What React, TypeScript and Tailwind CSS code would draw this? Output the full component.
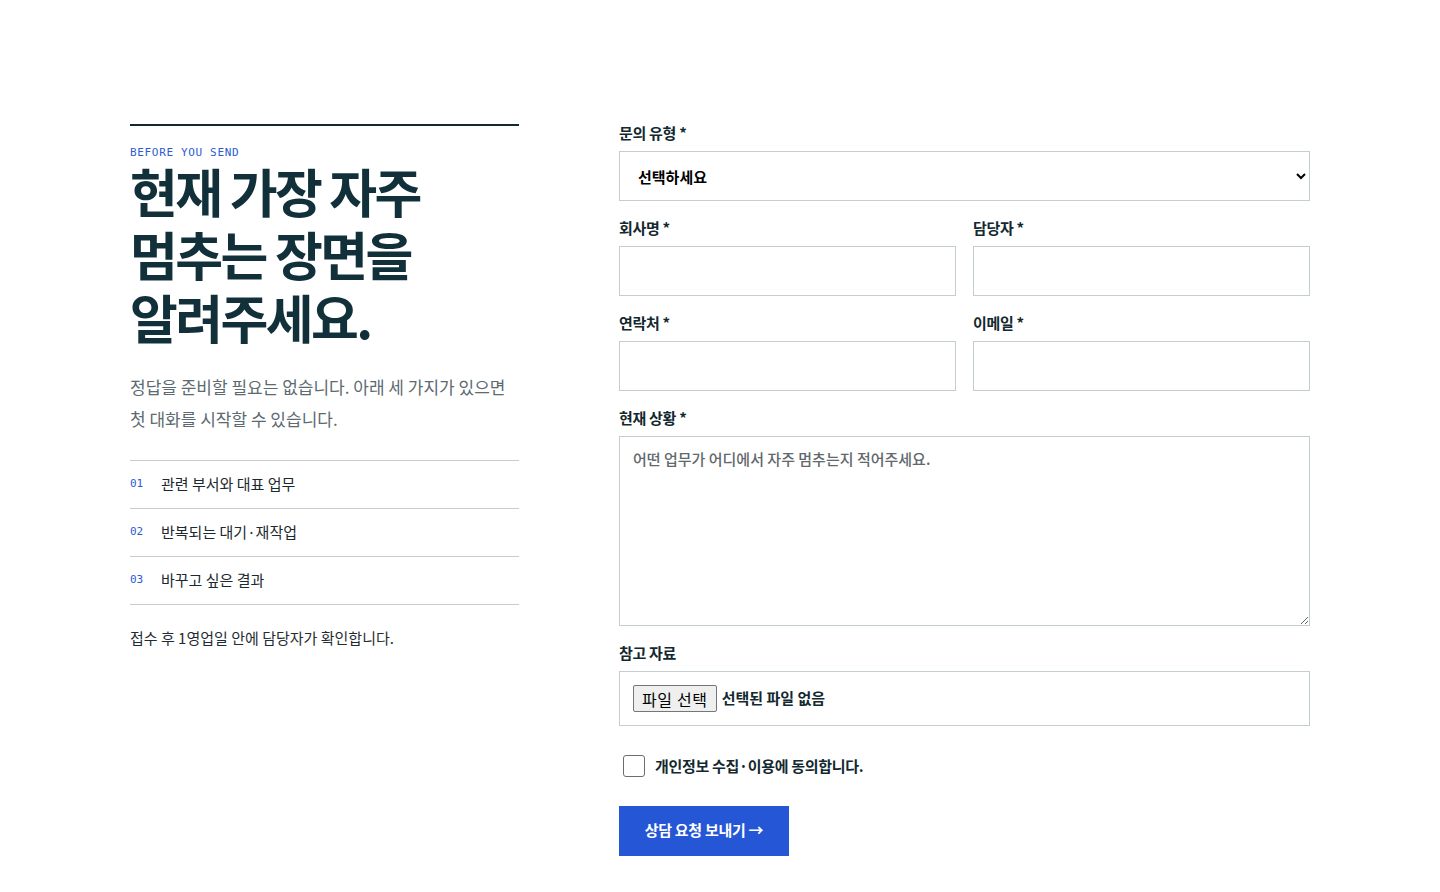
import React from "react";

const KR = "font-['Noto_Sans_CJK_KR','Noto_Sans',sans-serif]";

function Label({ children }: { children: React.ReactNode }) {
  return (
    <div className="mb-[8px] text-[15px] leading-[21px] font-bold text-[#13282f] tracking-[-0.02em]">
      {children}
    </div>
  );
}

export default function App() {
  const items = [
    ["01", "관련 부서와 대표 업무"],
    ["02", "반복되는 대기·재작업"],
    ["03", "바꾸고 싶은 결과"],
  ];
  return (
    <div className={`${KR} min-h-[892px] bg-white`}>
      <div className="mx-auto flex w-[1180px] gap-[100px] pt-[122px]">
        {/* Left column */}
        <div className="w-[389px] shrink-0 pt-[2px]">
          <div className="border-t-2 border-[#13282f]" />
          <div className="mt-[19px] font-['DejaVu_Sans_Mono','Liberation_Mono',monospace] text-[11px] leading-[16px] tracking-[0.06em] text-[#2d5bd1]">
            BEFORE YOU SEND
          </div>
          <h1 className="-mt-[2px] text-[52px] leading-[63px] font-bold tracking-[-0.05em] text-[#12303a]">
            현재 가장 자주
            <br />
            멈추는 장면을
            <br />
            알려주세요.
          </h1>
          <p className="mt-[23px] break-keep text-[17px] leading-[32px] text-[#5d6a70]">
            정답을 준비할 필요는 없습니다. 아래 세 가지가 있으면 첫 대화를 시작할 수 있습니다.
          </p>
          <ul className="mt-[25px] border-t border-[#c4cdd0]">
            {items.map(([n, t]) => (
              <li
                key={n}
                className="flex h-[48px] items-center border-b border-[#c4cdd0]"
              >
                <span className="w-[31px] font-['DejaVu_Sans_Mono','Liberation_Mono',monospace] text-[11px] text-[#2d5bd1]">
                  {n}
                </span>
                <span className="text-[15px] text-[#1c2a30]">{t}</span>
              </li>
            ))}
          </ul>
          <p className="mt-[21px] text-[15px] leading-[24px] text-[#1f2d33]">
            접수 후 1영업일 안에 담당자가 확인합니다.
          </p>
        </div>

        {/* Right column: form */}
        <form className="flex w-[691px] shrink-0 flex-col gap-[16px]">
          <div>
            <Label>문의 유형 *</Label>
            <select className="h-[50px] w-full border border-[#c4cdd0] bg-white px-[14px] text-[15px] font-bold text-black outline-none">
              <option>선택하세요</option>
            </select>
          </div>
          <div className="grid grid-cols-2 gap-[17px]">
            <div>
              <Label>회사명 *</Label>
              <input className="h-[50px] w-full border border-[#c4cdd0] bg-white px-[14px] text-[15px] outline-none" />
            </div>
            <div>
              <Label>담당자 *</Label>
              <input className="h-[50px] w-full border border-[#c4cdd0] bg-white px-[14px] text-[15px] outline-none" />
            </div>
          </div>
          <div className="grid grid-cols-2 gap-[17px]">
            <div>
              <Label>연락처 *</Label>
              <input className="h-[50px] w-full border border-[#c4cdd0] bg-white px-[14px] text-[15px] outline-none" />
            </div>
            <div>
              <Label>이메일 *</Label>
              <input className="h-[50px] w-full border border-[#c4cdd0] bg-white px-[14px] text-[15px] outline-none" />
            </div>
          </div>
          <div>
            <Label>현재 상황 *</Label>
            <textarea
              placeholder="어떤 업무가 어디에서 자주 멈추는지 적어주세요."
              className="block h-[190px] w-full border border-[#c4cdd0] bg-white px-[13px] py-[11px] text-[15px] font-medium leading-[22px] outline-none placeholder:text-[#62686c]"
            />
          </div>
          <div>
            <Label>참고 자료</Label>
            <div className="flex h-[55px] items-center gap-[5px] border border-[#c4cdd0] px-[13px]">
              <span className="flex h-[27px] items-center rounded-[2px] border border-[#767676] bg-[#efefef] px-[8px] text-[16px] tracking-[0.04em] text-black">
                파일 선택
              </span>
              <span className="text-[15px] font-bold text-[#13282f]">
                선택된 파일 없음
              </span>
            </div>
          </div>
          <label className="mt-[13px] flex items-center gap-[10px] pl-[4px]">
            <span className="h-[22px] w-[22px] rounded-[3px] border border-[#6d6d6d] bg-white" />
            <span className="text-[15px] font-bold text-[#13282f] tracking-[-0.02em]">
              개인정보 수집·이용에 동의합니다.
            </span>
          </label>
          <div className="mt-[12px]">
            <button
              type="button"
              className="h-[50px] w-[170px] bg-[#2456d6] text-[15px] font-bold text-white tracking-[-0.02em]"
            >
              상담 요청 보내기 →
            </button>
          </div>
        </form>
      </div>
    </div>
  );
}
